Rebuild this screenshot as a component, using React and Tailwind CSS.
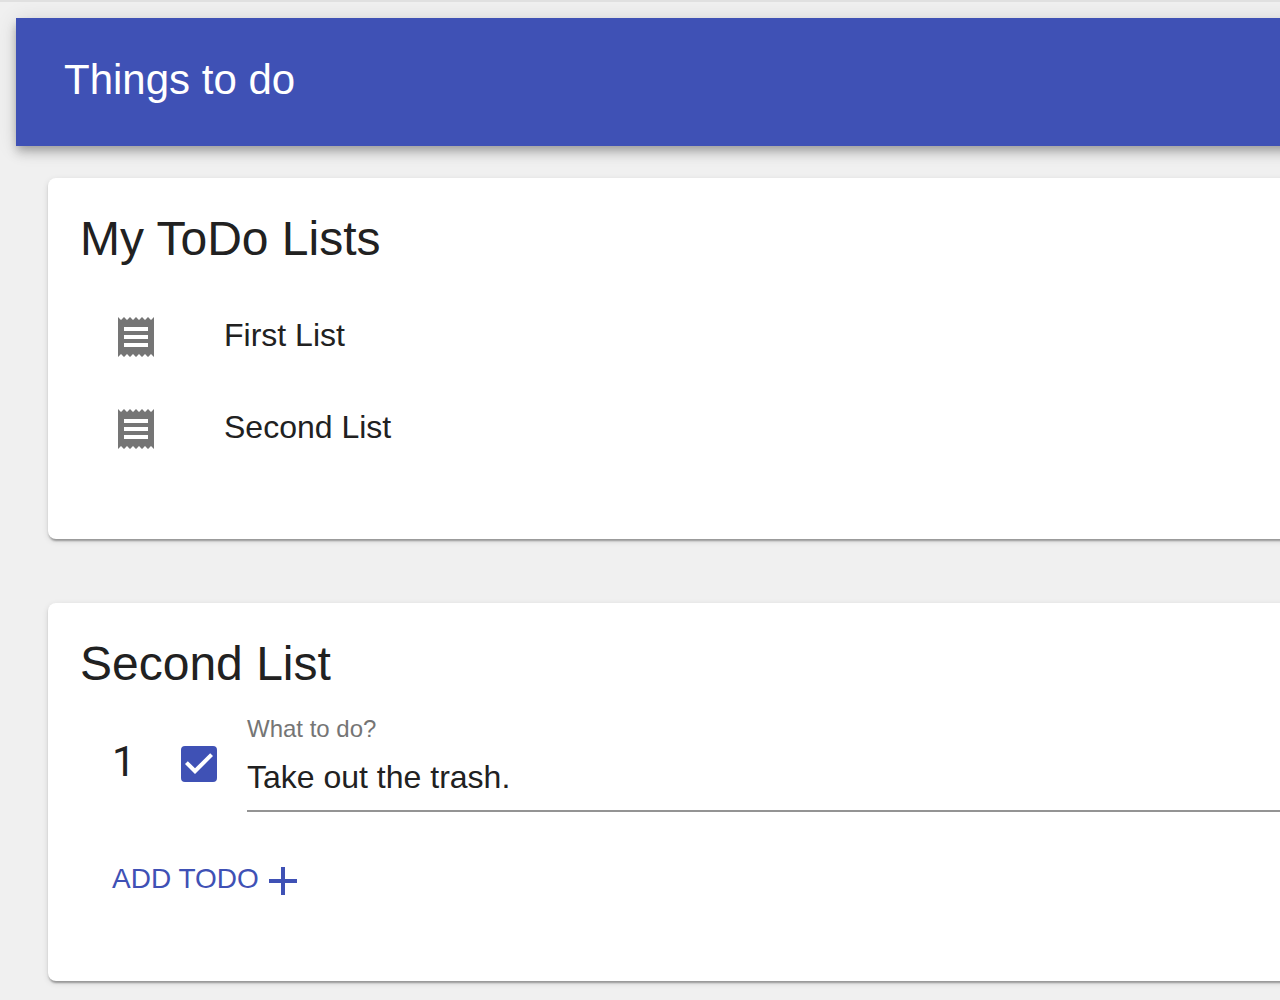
import { useState } from "react";

const lists = ["First List", "Second List"];

function ReceiptIcon() {
  return (
    <svg viewBox="0 0 24 24" className="size-12 fill-[#757575]" aria-hidden="true">
      <path d="M18 17H6v-2h12v2zm0-4H6v-2h12v2zm0-4H6V7h12v2zM3 22l1.500-1.500L6 22l1.500-1.500L9 22l1.500-1.500L12 22l1.500-1.500L15 22l1.500-1.500L18 22l1.500-1.500L21 22V2l-1.500 1.500L18 2l-1.500 1.500L15 2l-1.500 1.500L12 2l-1.500 1.500L9 2 7.500 3.500 6 2 4.500 3.500 3 2v20z" />
    </svg>
  );
}

function Card({ title, children }) {
  return (
    <section className="rounded-lg bg-white p-8 pb-16 shadow-[0_4px_2px_-2px_rgba(0,0,0,0.2),0_2px_2px_0_rgba(0,0,0,0.14),0_2px_6px_0_rgba(0,0,0,0.12)]">
      <h2 className="text-5xl leading-[58px]">{title}</h2>
      {children}
    </section>
  );
}

export default function App() {
  const [done, setDone] = useState(true);
  const [text, setText] = useState("Take out the trash.");

  return (
    <div className="min-h-screen overflow-hidden border-t-2 border-[#e0e0e0] bg-[#f0f0f0] pt-4 pl-4 font-['Liberation_Sans',Arial,sans-serif] text-[#212121]">
      <header className="-mr-32 flex h-32 items-center bg-[#3f51b5] px-12 pb-1 text-white shadow-[0_4px_8px_-2px_rgba(0,0,0,0.2),0_8px_10px_0_rgba(0,0,0,0.14),0_2px_20px_0_rgba(0,0,0,0.12)]">
        <h1 className="text-[42px] leading-[48px]">Things to do</h1>
      </header>

      <main className="-mr-32 flex flex-col gap-16 p-8">
        <Card title="My ToDo Lists">
          <ul className="mt-[23px]">
            {lists.map((name) => (
              <li key={name}>
                <button type="button" className="flex h-[92px] w-full items-center px-8 text-left">
                  <span className="w-28 shrink-0">
                    <ReceiptIcon />
                  </span>
                  <span className="pb-1 text-[32px] leading-10">{name}</span>
                </button>
              </li>
            ))}
          </ul>
        </Card>

        <Card title="Second List">
          <form className="mt-6 px-8 pb-3" onSubmit={(e) => e.preventDefault()}>
            <div className="flex items-center">
              <span className="w-[63px] pb-1.5 font-[Roboto,sans-serif] text-[42px] leading-[48px]">1</span>
              <span className="relative mb-0.5 size-12 shrink-0">
                <input
                  type="checkbox"
                  aria-label="Done"
                  checked={done}
                  onChange={(e) => setDone(e.target.checked)}
                  className="peer m-1.5 block size-9 appearance-none rounded border-4 border-[#757575] checked:border-[#3f51b5] checked:bg-[#3f51b5]"
                />
                <svg
                  viewBox="0 0 24 24"
                  className="pointer-events-none absolute inset-0 hidden size-12 fill-white peer-checked:block"
                  aria-hidden="true"
                >
                  <path d="M10 17l-5-5 1.410-1.410L10 14.170l7.590-7.590L19 8l-9 9z" />
                </svg>
              </span>
              <div className="ml-6 flex grow flex-col">
                <label htmlFor="todo-1" className="text-2xl leading-6 text-[#757575]">
                  What to do?
                </label>
                <input
                  id="todo-1"
                  type="text"
                  value={text}
                  onChange={(e) => setText(e.target.value)}
                  className="mt-1 h-[67px] w-full border-b-2 border-[#949494] text-[32px] outline-none"
                />
              </div>
            </div>
            <button type="button" className="mt-[45px] flex items-center text-[28px] leading-10 text-[#3f51b5]">
              <span className="pb-1">ADD TODO</span>
              <svg viewBox="0 0 24 24" className="size-12 fill-current" aria-hidden="true">
                <path d="M19 13h-6v6h-2v-6H5v-2h6V5h2v6h6v2z" />
              </svg>
            </button>
          </form>
        </Card>
      </main>
    </div>
  );
}
